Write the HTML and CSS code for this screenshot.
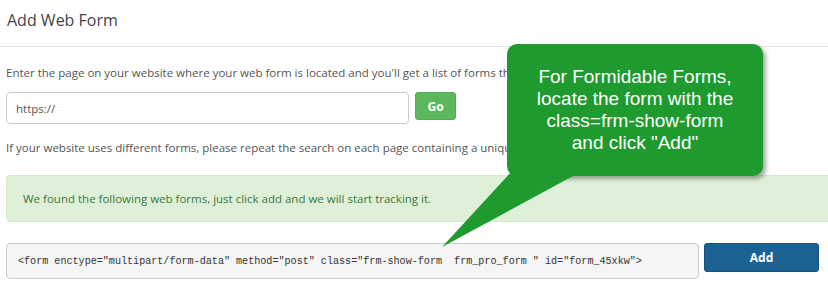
FILE: index.html
```html
<!DOCTYPE html>
<html lang="en">
<head>
  <meta charset="UTF-8">
  <title>Add Web Form</title>
  <link rel="stylesheet" href="styles.css">
</head>
<body>
  <div class="page">
    <div class="panel-head">
      <h2>Add Web Form</h2>
    </div>
    <div class="panel-body">
      <p class="intro">Enter the page on your website where your web form is located and you'll get a list of forms that we can track.</p>
      <div class="search-row">
        <input type="text" class="url-input" placeholder="https://">
        <button class="btn-go">Go</button>
      </div>
      <p class="note">If your website uses different forms, please repeat the search on each page containing a unique form.</p>
      <div class="alert">We found the following web forms, just click add and we will start tracking it.</div>
      <div class="form-row">
        <div class="code-box">&lt;form enctype="multipart/form-data" method="post" class="frm-show-form&nbsp; frm_pro_form " id="form_45xkw"&gt;</div>
        <button class="btn-add">Add</button>
      </div>
    </div>

    <!-- annotation bubble, drawn over the page -->
    <div class="callout">For Formidable Forms,<br>locate the form with the<br>class=frm-show-form<br>and click "Add"</div>
    <svg class="callout-tail" width="828" height="287" viewBox="0 0 828 287">
      <polygon points="513,170 584,170 442,247" fill="#1e9a2f"/>
    </svg>
  </div>
</body>
</html>
```

FILE: styles.css
```css
body {
  margin: 0;
  font-family: 'Open Sans', 'Liberation Sans', sans-serif;
  color: #555;
  background: #fff;
  overflow: hidden;
}

.page {
  position: relative;
  width: 840px;
  height: 287px;
}

.panel-head {
  padding: 10px 7px 16px;
  border-bottom: 1px solid #e5e5e5;
}

.panel-head h2 {
  margin: 0;
  font-size: 16px;
  line-height: 20px;
  font-weight: normal;
  color: #444;
}

.panel-body {
  padding: 17px 0 0 6px;
}

.intro,
.note {
  margin: 0;
  font-size: 11.5px;
  line-height: 18px;
  color: #555;
  white-space: nowrap;
}

.search-row {
  display: flex;
  align-items: flex-start;
  gap: 6px;
  margin-top: 10px;
}

.url-input {
  box-sizing: border-box;
  width: 403px;
  height: 32px;
  padding: 0 9px;
  border: 1px solid #ccc;
  border-radius: 4px;
  font-family: inherit;
  font-size: 11.5px;
  color: #555;
  outline: none;
}

.url-input::placeholder {
  color: #555;
}

.btn-go {
  box-sizing: border-box;
  width: 41px;
  height: 28px;
  border: 1px solid #4cae4c;
  border-radius: 3px;
  background: #5cb85c;
  color: #fff;
  font-family: inherit;
  font-weight: bold;
  font-size: 12px;
}

.note {
  margin-top: 15px;
}

.alert {
  box-sizing: border-box;
  height: 47px;
  margin-top: 18px;
  padding: 0 16px;
  display: flex;
  align-items: center;
  background: #dff0d8;
  border: 1px solid #d6e9c6;
  border-radius: 4px;
  color: #3c763d;
  font-size: 11.5px;
}

.form-row {
  display: flex;
  align-items: flex-start;
  gap: 5px;
  margin-top: 21px;
}

.code-box {
  box-sizing: border-box;
  width: 693px;
  height: 36px;
  padding: 0 11px;
  display: flex;
  align-items: center;
  background: #f5f5f5;
  border: 1px solid #ccc;
  border-radius: 4px;
  font-family: 'Liberation Mono', monospace;
  font-size: 10.1px;
  color: #333;
  white-space: nowrap;
}

.btn-add {
  box-sizing: border-box;
  width: 115px;
  height: 29px;
  border: 1px solid #15527c;
  border-radius: 3px;
  background: #1a6194;
  color: #fff;
  font-family: inherit;
  font-weight: bold;
  font-size: 12px;
}

.callout {
  position: absolute;
  left: 507px;
  top: 44px;
  box-sizing: border-box;
  width: 256px;
  height: 132px;
  display: flex;
  align-items: center;
  justify-content: center;
  text-align: center;
  background: #1e9a2f;
  border-radius: 10px;
  box-shadow: 3px 3px 4px rgba(0, 0, 0, 0.35);
  color: #fff;
  font-family: 'Liberation Sans', Arial, sans-serif;
  font-size: 19px;
  line-height: 22px;
}

.callout-tail {
  position: absolute;
  left: 0;
  top: 0;
  pointer-events: none;
}
```
